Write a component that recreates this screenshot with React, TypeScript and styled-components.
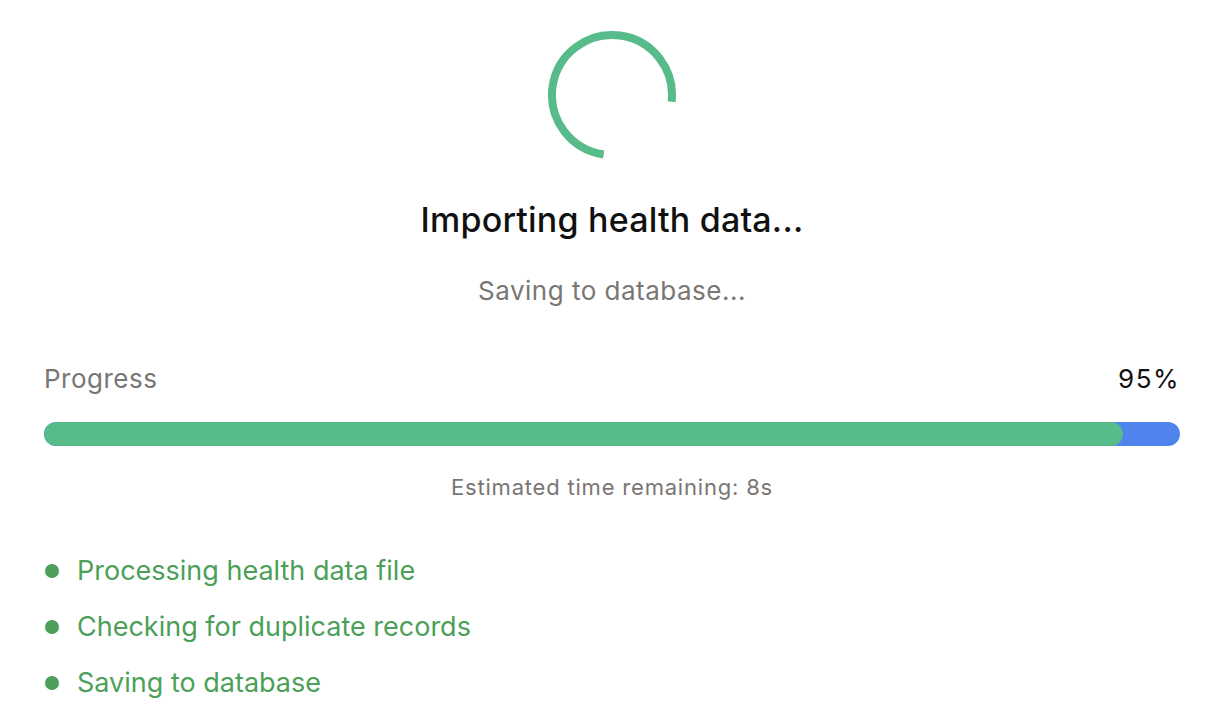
import styled, { createGlobalStyle } from "styled-components";

const GlobalStyle = createGlobalStyle`
  html, body {
    margin: 0;
    padding: 0;
    background: #ffffff;
    font-family: Inter, "Noto Sans", "Liberation Sans", sans-serif;
  }
`;

const Page = styled.div`
  width: 1222px;
  height: 720px;
  box-sizing: border-box;
  padding: 30px 42px 0 44px;
  display: flex;
  flex-direction: column;
  align-items: center;
  overflow: hidden;
`;

const SpinnerWrap = styled.div`
  width: 130px;
  height: 130px;
  display: flex;
  align-items: center;
  justify-content: center;
`;

const Title = styled.h1`
  margin: 40px 0 0;
  font-size: 34px;
  font-weight: 500;
  letter-spacing: 0.2px;
  color: #111111;
  line-height: 40px;
`;

const Subtitle = styled.div`
  margin-top: 35px;
  font-size: 26px;
  letter-spacing: 0.5px;
  color: #7a7673;
  line-height: 32px;
`;

const ProgressHeader = styled.div`
  width: 100%;
  margin-top: 56px;
  display: flex;
  justify-content: space-between;
  align-items: center;
  font-size: 26px;
  line-height: 32px;
`;

const Label = styled.span<{ $dark?: boolean }>`
  color: ${(p) => (p.$dark ? "#111111" : "#7a7673")};
  letter-spacing: ${(p) => (p.$dark ? "1.5px" : "0.5px")};
`;

const Track = styled.div`
  width: 100%;
  height: 24px;
  margin-top: 27px;
  border-radius: 12px;
  background: #4f84ec;
  overflow: hidden;
`;

const Fill = styled.div`
  height: 100%;
  border-radius: 12px;
  background: #57bb8a;
`;

const Eta = styled.div`
  margin-top: 27px;
  font-size: 22px;
  letter-spacing: 0.8px;
  line-height: 28px;
  color: #7a7673;
`;

const Steps = styled.ul`
  width: 100%;
  margin: 54px 0 0;
  padding: 0;
  list-style: none;
  display: flex;
  flex-direction: column;
  gap: 24px;
`;

const Step = styled.li`
  display: flex;
  align-items: center;
  gap: 18px;
  font-size: 27px;
  line-height: 32px;
  color: #4c9f58;
`;

const Dot = styled.span`
  width: 14px;
  height: 14px;
  margin-left: 1px;
  border-radius: 50%;
  background: #4c9f58;
  flex-shrink: 0;
`;

function Spinner() {
  const r = 60;
  const c = 2 * Math.PI * r;
  const arc = (268 / 360) * c;
  return (
    <SpinnerWrap>
      <svg width="130" height="130" viewBox="0 0 130 130">
        <circle
          cx="65"
          cy="65"
          r={r}
          fill="none"
          stroke="#57bb8a"
          strokeWidth="8"
          strokeDasharray={`${arc} ${c}`}
          transform="rotate(98 65 65)"
        />
      </svg>
    </SpinnerWrap>
  );
}

const steps = ["Processing health data file", "Checking for duplicate records", "Saving to database"];

export default function App() {
  const progress = 95;
  return (
    <>
      <GlobalStyle />
      <Page>
        <Spinner />
        <Title>Importing health data...</Title>
        <Subtitle>Saving to database...</Subtitle>
        <ProgressHeader>
          <Label>Progress</Label>
          <Label $dark>{progress}%</Label>
        </ProgressHeader>
        <Track>
          <Fill style={{ width: `${progress}%` }} />
        </Track>
        <Eta>Estimated time remaining: 8s</Eta>
        <Steps>
          {steps.map((s) => (
            <Step key={s}>
              <Dot />
              {s}
            </Step>
          ))}
        </Steps>
      </Page>
    </>
  );
}
